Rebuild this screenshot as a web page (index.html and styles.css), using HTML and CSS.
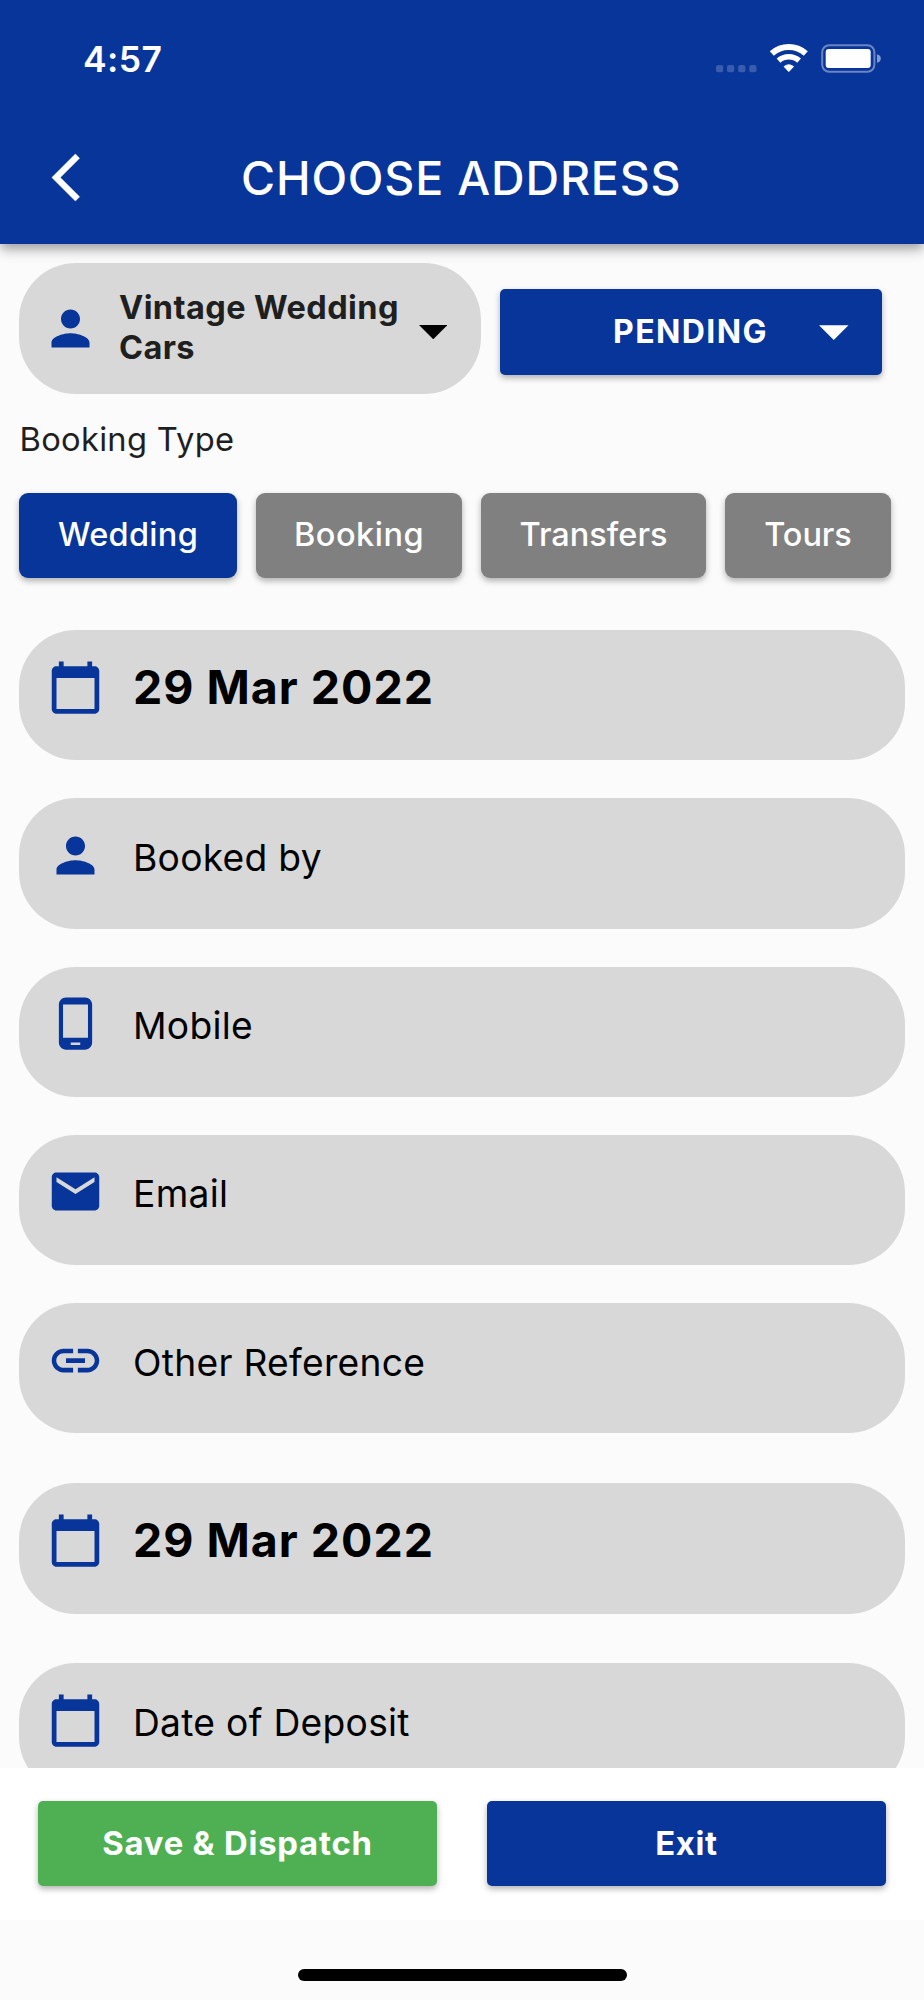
FILE: index.html
```html
<!DOCTYPE html>
<html lang="en">
<head>
<meta charset="utf-8">
<title>Choose Address</title>
<link rel="stylesheet" href="styles.css">
</head>
<body>
<svg width="0" height="0" class="sprite" aria-hidden="true">
  <symbol id="person" viewBox="0 0 24 24"><path d="M12 12c2.21 0 4-1.79 4-4s-1.79-4-4-4-4 1.79-4 4 1.79 4 4 4zm0 2c-2.67 0-8 1.34-8 4v2h16v-2c0-2.66-5.33-4-8-4z"/></symbol>
  <symbol id="calendar" viewBox="0 0 24 24"><path d="M20 3h-1V1h-2v2H7V1H5v2H4c-1.1 0-2 .9-2 2v16c0 1.1.9 2 2 2h16c1.1 0 2-.9 2-2V5c0-1.1-.9-2-2-2zm0 18H4V8h16v13z"/></symbol>
  <symbol id="phone" viewBox="0 0 24 24"><path d="M16 1H8C6.34 1 5 2.34 5 4v16c0 1.66 1.34 3 3 3h8c1.66 0 3-1.34 3-3V4c0-1.66-1.34-3-3-3zm-2 20h-4v-1h4v1zm3.25-3H6.75V4h10.5v14z"/></symbol>
  <symbol id="mail" viewBox="0 0 24 24"><path d="M20 4H4c-1.1 0-1.99.9-1.99 2L2 18c0 1.1.9 2 2 2h16c1.1 0 2-.9 2-2V6c0-1.1-.9-2-2-2zm0 4l-8 5-8-5V6l8 5 8-5v2z"/></symbol>
  <symbol id="link" viewBox="0 0 24 24"><path d="M3.9 12c0-1.71 1.39-3.1 3.1-3.1h4V7H7c-2.76 0-5 2.24-5 5s2.24 5 5 5h4v-1.9H7c-1.71 0-3.1-1.39-3.1-3.1zM8 13h8v-2H8v2zm9-6h-4v1.9h4c1.71 0 3.1 1.39 3.1 3.1s-1.39 3.1-3.1 3.1h-4V17h4c2.76 0 5-2.24 5-5s-2.24-5-5-5z"/></symbol>
</svg>
<div class="screen">
  <header class="header">
    <div class="status">
      <span class="time">4:57</span>
      <svg class="indicators" viewBox="0 0 166 30" width="166" height="30">
        <g fill="#fff" fill-opacity=".2">
          <rect x="0" y="22" width="7.2" height="7.2" rx="2"/>
          <rect x="11" y="22" width="7.2" height="7.2" rx="2"/>
          <rect x="22.2" y="22" width="7.2" height="7.2" rx="2"/>
          <rect x="33.3" y="22" width="7.2" height="7.2" rx="2"/>
        </g>
        <g fill="none" stroke="#fff">
          <path stroke-width="6" d="M55.8 10.4A25.6 25.6 0 0 1 89.8 10.4"/>
          <path stroke-width="5.6" d="M62.5 17.7A15.6 15.6 0 0 1 83.1 17.7"/>
        </g>
        <path fill="#fff" stroke="#fff" stroke-linejoin="round" d="M72.8 28.6L68.1 23.6Q72.8 20 77.5 23.6Z"/>
        <rect x="106.2" y="2.2" width="52.2" height="26.6" rx="7" fill="none" stroke="#fff" stroke-opacity=".4" stroke-width="2"/>
        <rect x="109.7" y="6" width="45" height="19" rx="3" fill="#fff"/>
        <path fill="#fff" fill-opacity=".5" d="M161 11.2q3.8 1 3.8 4.3t-3.8 4.3z"/>
      </svg>
    </div>
    <div class="appbar">
      <svg class="back" viewBox="0 0 24 24"><path d="M17.51 3.87L15.73 2.1 5.84 12l9.9 9.9 1.77-1.77L9.38 12z"/></svg>
      <h1 class="title">CHOOSE ADDRESS</h1>
    </div>
  </header>

  <main class="content">
    <div class="top-row">
      <div class="client">
        <svg class="icon"><use href="#person"/></svg>
        <span class="client-name">Vintage Wedding Cars</span>
        <svg class="caret" viewBox="0 0 10 5"><path d="M0 0l5 5 5-5z"/></svg>
      </div>
      <div class="state">
        <span class="state-label">PENDING</span>
        <svg class="caret" viewBox="0 0 10 5"><path d="M0 0l5 5 5-5z"/></svg>
      </div>
    </div>
    <div class="type-label">Booking Type</div>
    <div class="types">
      <div class="type type-active">Wedding</div>
      <div class="type type-booking">Booking</div>
      <div class="type type-transfers">Transfers</div>
      <div class="type type-tours">Tours</div>
    </div>
    <div class="fields">
      <div class="field"><svg class="icon"><use href="#calendar"/></svg><span class="date">29 Mar 2022</span></div>
      <div class="field"><svg class="icon"><use href="#person"/></svg><span class="label">Booked by</span></div>
      <div class="field"><svg class="icon"><use href="#phone"/></svg><span class="label">Mobile</span></div>
      <div class="field"><svg class="icon"><use href="#mail"/></svg><span class="label">Email</span></div>
      <div class="field field-spaced"><svg class="icon"><use href="#link"/></svg><span class="label">Other Reference</span></div>
      <div class="field field-spaced"><svg class="icon"><use href="#calendar"/></svg><span class="date">29 Mar 2022</span></div>
      <div class="field"><svg class="icon"><use href="#calendar"/></svg><span class="label">Date of Deposit</span></div>
    </div>
  </main>

  <footer class="actions">
    <div class="action save">Save &amp; Dispatch</div>
    <div class="action exit">Exit</div>
  </footer>
  <div class="home"><div class="home-bar"></div></div>
</div>
</body>
</html>
```

FILE: styles.css
```css
* { box-sizing: border-box; }

body {
  margin: 0;
  font-family: Inter, Roboto, sans-serif;
  color: #1f1f1f;
  background: #fbfbfb;
}

.sprite { position: absolute; }

.screen {
  width: 924px;
  height: 2000px;
  display: flex;
  flex-direction: column;
  overflow: hidden;
}

.header {
  height: 244px;
  flex: none;
  background: #083599;
  color: #fff;
  box-shadow: 0 5px 9px -2px rgba(0,0,0,.22), 0 8px 11px rgba(0,0,0,.13), 0 2px 18px rgba(0,0,0,.1);
}

.status {
  height: 111px;
  padding: 7px 42px 0 83px;
  display: flex;
  align-items: center;
  justify-content: space-between;
}

.time {
  font-size: 35.5px;
  font-weight: 600;
  letter-spacing: .4px;
}

.indicators { margin-bottom: 2px; }

.appbar {
  height: 133px;
  display: flex;
  align-items: center;
  padding-left: 38px;
}

.back {
  width: 57px;
  height: 57px;
  fill: #fff;
  stroke: #fff;
  stroke-width: .2;
}

.title {
  margin: 0 0 0 146px;
  font-size: 46.5px;
  font-weight: 500;
  letter-spacing: .83px;
  white-space: nowrap;
}

.content {
  height: 1523.5px;
  flex: none;
  padding: 19px 19px 0;
  overflow: hidden;
  position: relative;
  z-index: -1;
}

.top-row {
  display: flex;
  align-items: center;
  gap: 19px;
}

.icon {
  width: 57px;
  height: 57px;
  flex: none;
  fill: #083599;
}

.caret { flex: none; }

.client {
  width: 462px;
  height: 130.5px;
  padding-left: 23px;
  border-radius: 57px;
  background: #d8d8d8;
  display: flex;
  align-items: center;
}

.client-name {
  width: 300px;
  margin: 0 0 1px 20px;
  font-size: 32.5px;
  line-height: 40px;
  font-weight: 700;
  letter-spacing: .4px;
}

.client .caret {
  width: 28.5px;
  height: 14.3px;
  margin: 8px 0 0 -.5px;
  fill: #000;
}

.state {
  width: 382px;
  height: 85.5px;
  margin-top: 7px;
  padding: 0 33.5px 0 113px;
  border-radius: 5px;
  background: #083599;
  color: #fff;
  box-shadow: 0 3px 6px rgba(0,0,0,.3);
  display: flex;
  align-items: center;
  justify-content: space-between;
}

.state-label {
  font-size: 32px;
  font-weight: 700;
  letter-spacing: 1.4px;
}

.state .caret {
  width: 29.5px;
  height: 15px;
  margin-top: 2px;
  fill: #fff;
}

.type-label {
  height: 40px;
  margin-top: 25.5px;
  padding-left: .5px;
  font-size: 32.7px;
  line-height: 41px;
  letter-spacing: .28px;
}

.types {
  margin-top: 34px;
  display: flex;
  gap: 19px;
}

.type {
  width: 218px;
  height: 85px;
  border-radius: 9px;
  background: #808080;
  color: #fff;
  box-shadow: 0 3px 6px rgba(0,0,0,.3);
  font-size: 32.5px;
  line-height: 84px;
  font-weight: 550;
  letter-spacing: .3px;
  text-align: center;
}

.type-active { background: #083599; }
.type-booking { width: 206px; letter-spacing: .5px; }
.type-transfers { width: 225px; letter-spacing: 0; }
.type-tours { width: 166px; letter-spacing: -.1px; }

.fields {
  margin-top: 52px;
  display: flex;
  flex-direction: column;
  gap: 38px;
}

.field {
  height: 130.3px;
  flex: none;
  padding: 28.5px 0 0 28px;
  border-radius: 57px;
  background: #d8d8d8;
  color: #000;
  display: flex;
  align-items: flex-start;
}

.field-spaced { margin-bottom: 11.8px; }

.date {
  margin-left: 29px;
  font-size: 46.5px;
  line-height: 57px;
  font-weight: 660;
  letter-spacing: 1px;
}

.label {
  margin-left: 29px;
  font-size: 37.2px;
  line-height: 62px;
  letter-spacing: .28px;
}

.actions {
  height: 152px;
  flex: none;
  padding: 33px 38px 0;
  background: #fff;
  display: flex;
  gap: 50px;
}

.action {
  flex: 1;
  height: 85.5px;
  border-radius: 5px;
  color: #fff;
  box-shadow: 0 3px 6px rgba(0,0,0,.3);
  font-size: 32.8px;
  line-height: 84.5px;
  font-weight: 700;
  letter-spacing: .8px;
  text-align: center;
}

.save { background: #4eb052; }
.exit { background: #083599; letter-spacing: .7px; }

.home {
  flex: 1;
  padding-top: 49.5px;
}

.home-bar {
  width: 329px;
  height: 11.5px;
  margin: 0 auto;
  border-radius: 6px;
  background: #000;
}
```
